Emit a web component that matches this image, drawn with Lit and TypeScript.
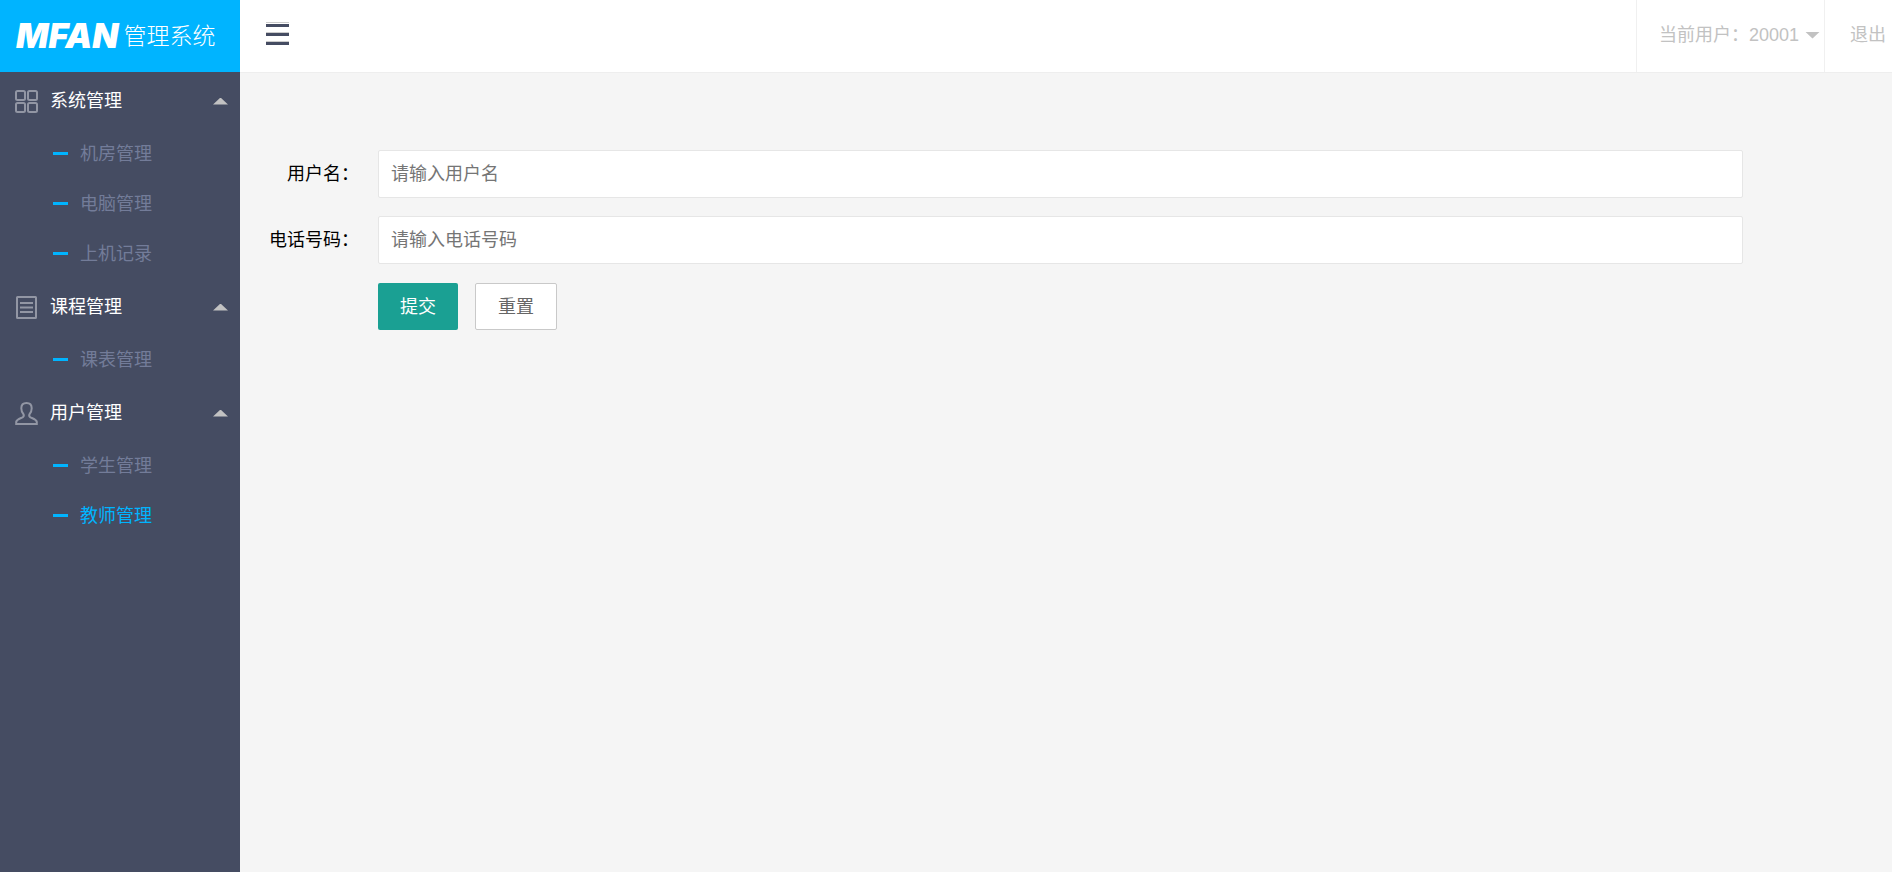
import { LitElement, html, css, svg } from "lit";
import { customElement, state } from "lit/decorators.js";
import { classMap } from "lit/directives/class-map.js";

interface MenuGroup {
  title: string;
  icon: string;
  items: string[];
}

const MENU: MenuGroup[] = [
  { title: "系统管理", icon: "grid", items: ["机房管理", "电脑管理", "上机记录"] },
  { title: "课程管理", icon: "list", items: ["课表管理"] },
  { title: "用户管理", icon: "user", items: ["学生管理", "教师管理"] },
];

const ICONS: Record<string, unknown> = {
  grid: svg`
    <rect x="1" y="2" width="9" height="9" rx="1.5" />
    <rect x="13" y="2" width="9" height="9" rx="1.5" />
    <rect x="1" y="14" width="9" height="9" rx="1.5" />
    <rect x="13" y="14" width="9" height="9" rx="1.5" />`,
  list: svg`
    <rect x="2" y="2" width="19" height="21" rx="0.5" />
    <path d="M5 8h13M5 12.500h13M5 17h13" />`,
  user: svg`
    <path d="M11.5 2C8.300 2 6.300 4.200 6.300 7.300C6.300 9.600 7 11.600 8.500 13.200C9 14.300 8.800 15.600 7.600 16.300C5 17.500 1.800 18.300 1.200 20.800V23H21.800V20.800C21.200 18.300 18 17.500 15.400 16.300C14.200 15.600 14 14.300 14.500 13.200C16 11.600 16.700 9.600 16.700 7.300C16.700 4.200 14.700 2 11.500 2Z" />`,
};

@customElement("app-root")
export class AppRoot extends LitElement {
  @state() private active = "教师管理";
  @state() private closed: string[] = [];

  static styles = css`
    :host {
      display: grid;
      grid-template-columns: 240px 1fr;
      grid-template-rows: auto 1fr;
      min-height: 100vh;
      background: #f5f5f5;
      color: #000;
      font: 18px/24px "Liberation Sans", "Noto Sans CJK SC", sans-serif;
    }
    * {
      box-sizing: border-box;
    }
    a {
      color: inherit;
      text-decoration: none;
    }
    button,
    input {
      font: inherit;
      margin: 0;
    }
    button {
      cursor: pointer;
    }
    .logo {
      display: flex;
      align-items: center;
      gap: 5px;
      height: 73px;
      padding-left: 16px;
      border-bottom: 1px solid #454c62;
      background: #00b4ff;
      color: #fff;
      white-space: nowrap;
    }
    .brand {
      font: italic 900 34px/32px Inter, "Liberation Sans", sans-serif;
    }
    .product {
      font-size: 23px;
      font-weight: 300;
      line-height: 32px;
    }
    .header {
      display: flex;
      justify-content: space-between;
      background: #fff;
      border-bottom: 1px solid #eee;
      color: #c2c2c2;
    }
    .toggle {
      display: flex;
      align-items: center;
      padding: 0 26px 4px;
      border: 0;
      background: none;
    }
    .account {
      display: flex;
    }
    .account a {
      display: flex;
      align-items: center;
      gap: 6px;
      padding: 0 4px 2px 22px;
      border-left: 1px solid #f0f0f0;
    }
    .account .exit {
      padding: 0 6px 2px 25px;
    }
    .arrow {
      width: 15px;
      height: 7px;
      background: #c2c2c2;
      clip-path: polygon(0 100%, 50% 0, 100% 100%);
    }
    .arrow.down {
      clip-path: polygon(0 0, 100% 0, 50% 100%);
    }
    .side {
      background: #454c62;
    }
    .group {
      display: flex;
      align-items: center;
      gap: 12px;
      width: 100%;
      height: 56px;
      padding: 0 12px 0 15px;
      border: 0;
      background: none;
      color: #fff;
      text-align: left;
    }
    .group .icon {
      width: 23px;
      height: 24px;
      fill: none;
      stroke: #9296a4;
      stroke-width: 2;
    }
    .name {
      flex: 1;
    }
    .group .arrow.closed {
      clip-path: polygon(0 0, 100% 0, 50% 100%);
    }
    .item {
      display: flex;
      align-items: center;
      gap: 12px;
      height: 50px;
      padding-left: 53px;
      color: #737c99;
    }
    .item::before {
      content: "";
      width: 15px;
      height: 3px;
      margin-bottom: 1px;
      background: #00b4ff;
    }
    .item.active {
      color: #00b4ff;
    }
    .main {
      padding: 77px 149px 77px 0;
    }
    .form {
      display: grid;
      grid-template-columns: 119px 1fr;
      column-gap: 19px;
      row-gap: 18px;
      align-items: center;
    }
    .form label {
      text-align: right;
      white-space: nowrap;
    }
    .field {
      width: 100%;
      height: 48px;
      padding: 0 12px;
      border: 1px solid #e6e6e6;
      border-radius: 2px;
      background: #fff;
      outline: 0;
    }
    .field::placeholder {
      color: #757575;
      opacity: 1;
    }
    .field:focus {
      border-color: #c9c9c9;
    }
    .actions {
      grid-column: 2;
      display: flex;
      gap: 17px;
      padding-top: 1px;
    }
    .btn {
      height: 47px;
      padding: 0 22px;
      border: 0;
      border-radius: 2px;
      background: #1aa093;
      color: #fff;
    }
    .btn.reset {
      border: 1px solid #c9c9c9;
      background: #fff;
      color: #666;
    }
  `;

  private toggleGroup(title: string) {
    this.closed = this.closed.includes(title)
      ? this.closed.filter((t) => t !== title)
      : [...this.closed, title];
  }

  private select(event: Event, item: string) {
    event.preventDefault();
    this.active = item;
  }

  private renderGroup(group: MenuGroup) {
    const closed = this.closed.includes(group.title);
    return html`
      <button class="group" type="button" aria-expanded=${closed ? "false" : "true"}
        @click=${() => this.toggleGroup(group.title)}>
        <svg class="icon" viewBox="0 0 23 24" aria-hidden="true">${ICONS[group.icon]}</svg>
        <span class="name">${group.title}</span>
        <span class=${classMap({ arrow: true, closed })}></span>
      </button>
      ${closed
        ? null
        : group.items.map(
            (item) => html`<a href="#" class=${classMap({ item: true, active: item === this.active })}
              @click=${(e: Event) => this.select(e, item)}>${item}</a>`
          )}
    `;
  }

  render() {
    return html`
      <div class="logo"><span class="brand">MFAN</span><span class="product">管理系统</span></div>
      <header class="header">
        <button class="toggle" type="button" aria-label="菜单">
          <svg width="23" height="24" viewBox="0 0 23 24" aria-hidden="true">
            <path fill="#ccc" d="M0 0h23v1H0zM0 10h23v1H0zM0 19h23v1H0z" />
            <path fill="#454c62" d="M0 2h23v3H0zM0 11h23v3H0zM0 20h23v3H0z" />
          </svg>
        </button>
        <div class="account">
          <a href="#"><span>当前用户：20001</span><span class="arrow down"></span></a>
          <a class="exit" href="#">退出</a>
        </div>
      </header>
      <nav class="side">${MENU.map((g) => this.renderGroup(g))}</nav>
      <main class="main">
        <form class="form" @submit=${(e: Event) => e.preventDefault()}>
          <label for="username">用户名：</label>
          <input class="field" id="username" type="text" placeholder="请输入用户名" />
          <label for="phone">电话号码：</label>
          <input class="field" id="phone" type="text" placeholder="请输入电话号码" />
          <div class="actions">
            <button class="btn" type="submit">提交</button>
            <button class="btn reset" type="reset">重置</button>
          </div>
        </form>
      </main>
    `;
  }
}
